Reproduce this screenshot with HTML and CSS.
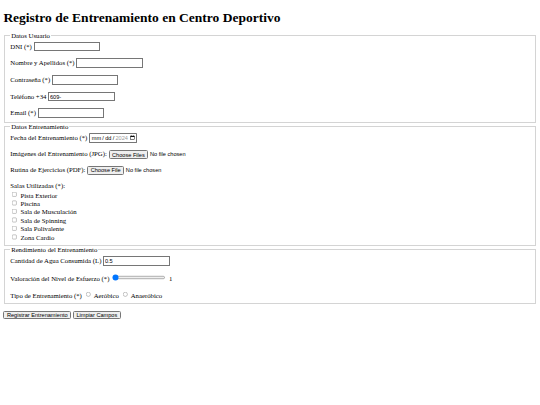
FILE: index.html
```html
<!DOCTYPE html>
<html lang="es">
<head>
<meta charset="utf-8">
<title>Registro de Entrenamiento</title>
<link rel="stylesheet" href="styles.css">
</head>
<body class="page">
<h1 class="title">Registro de Entrenamiento en Centro Deportivo</h1>
<form class="form">
<fieldset class="group">
<legend class="legend">Datos Usuario</legend>
<label class="lbl" for="dni">DNI (*)</label>
<input class="field" type="text" id="dni"><br><br>
<label class="lbl" for="nombre">Nombre y Apellidos (*)</label>
<input class="field" type="text" id="nombre"><br><br>
<label class="lbl" for="pass">Contraseña (*)</label>
<input class="field" type="password" id="pass"><br><br>
<label class="lbl" for="tel">Teléfono +34</label>
<input class="field" type="text" id="tel" value="609-"><br><br>
<label class="lbl" for="email">Email (*)</label>
<input class="field" type="text" id="email">
</fieldset>
<fieldset class="group">
<legend class="legend">Datos Entrenamiento</legend>
<label class="lbl" for="fecha">Fecha del Entrenamiento (*)</label>
<span class="datebox" id="fecha" role="textbox"><span class="seg">mm</span><span class="sep">/</span><span class="seg">dd</span><span class="sep">/</span><span class="seg year">2024</span><svg class="cal" width="12" height="12" viewBox="0 0 12 12"><rect x="1.5" y="2.5" width="9" height="8" fill="none" stroke="#000" stroke-width="1.2"/><rect x="1.5" y="2.5" width="9" height="2.2" fill="#000"/><rect x="3.3" y="1" width="1.2" height="2" fill="#000"/><rect x="7.5" y="1" width="1.2" height="2" fill="#000"/></svg></span><br><br>
<label class="lbl" for="img">Imágenes del Entrenamiento (JPG):</label>
<input class="file" type="file" id="img" multiple><br><br>
<label class="lbl" for="pdf">Rutina de Ejercicios (PDF):</label>
<input class="file" type="file" id="pdf"><br><br>
<label class="lbl salas">Salas Utilizadas (*):</label>
<input class="chk" type="checkbox" id="s1"><label for="s1"> Pista Exterior</label><br>
<input class="chk" type="checkbox" id="s2"><label for="s2"> Piscina</label><br>
<input class="chk" type="checkbox" id="s3"><label for="s3"> Sala de Musculación</label><br>
<input class="chk" type="checkbox" id="s4"><label for="s4"> Sala de Spinning</label><br>
<input class="chk" type="checkbox" id="s5"><label for="s5"> Sala Polivalente</label><br>
<input class="chk" type="checkbox" id="s6"><label for="s6"> Zona Cardio</label>
</fieldset>
<fieldset class="group">
<legend class="legend">Rendimiento del Entrenamiento</legend>
<label class="lbl" for="agua">Cantidad de Agua Consumida (L)</label>
<input class="field" type="text" id="agua" value="0.5"><br><br>
<label class="lbl" for="esf">Valoración del Nivel de Esfuerzo (*)</label>
<input class="range" type="range" id="esf" min="1" max="10" value="1">
<span class="out">1</span><br><br>
<label class="lbl">Tipo de Entrenamiento (*)</label>
<input type="radio" name="tipo" id="aer"><label for="aer"> Aeróbico</label>
<input type="radio" name="tipo" id="ana"><label for="ana"> Anaeróbico</label>
</fieldset>
<br>
<input class="btn" type="submit" value="Registrar Entrenamiento">
<input class="btn" type="reset" value="Limpiar Campos">
</form>
</body>
</html>
```
FILE: styles.css
```css
html {
  background: #ffffff;
}
.page {
  zoom: 0.421875;
  margin: 8px;
  font-family: "Liberation Serif", "Times New Roman", serif;
  font-size: 16px;
  color: #000000;
}
.title {
  font-size: 32px;
  line-height: 37px;
  font-weight: bold;
  margin: 16px 0 14px;
}
.group {
  margin: 0 2px;
  padding: 7px 12px 10px;
  border: 2px groove #d4d4d4;
}
.legend {
  padding: 0 2px;
}
.field {
  font-family: "Liberation Sans", Arial, sans-serif;
  font-size: 13.33px;
  width: 149px;
  padding: 2px 2px;
}
.salas {
  display: block;
  margin-bottom: 4px;
}
.chk {
  margin: 3px 3px 4px 4px;
}
.range {
  margin: 2px 2px 7px;
}
.datebox {
  display: inline-block;
  font-family: "Liberation Sans", Arial, sans-serif;
  font-size: 13.33px;
  line-height: 15px;
  border: 1px solid #767676;
  border-radius: 2px;
  padding: 2px 3px 2px 3px;
  color: #000;
  background: #fff;
}
.seg {
  padding: 0 1px;
}
.sep {
  padding: 0 2px;
}
.year {
  color: #9a9a9a;
}
.cal {
  vertical-align: -1px;
  margin-left: 3px;
}
.file, .btn {
  font-family: "Liberation Sans", Arial, sans-serif;
  font-size: 13.33px;
}
```
